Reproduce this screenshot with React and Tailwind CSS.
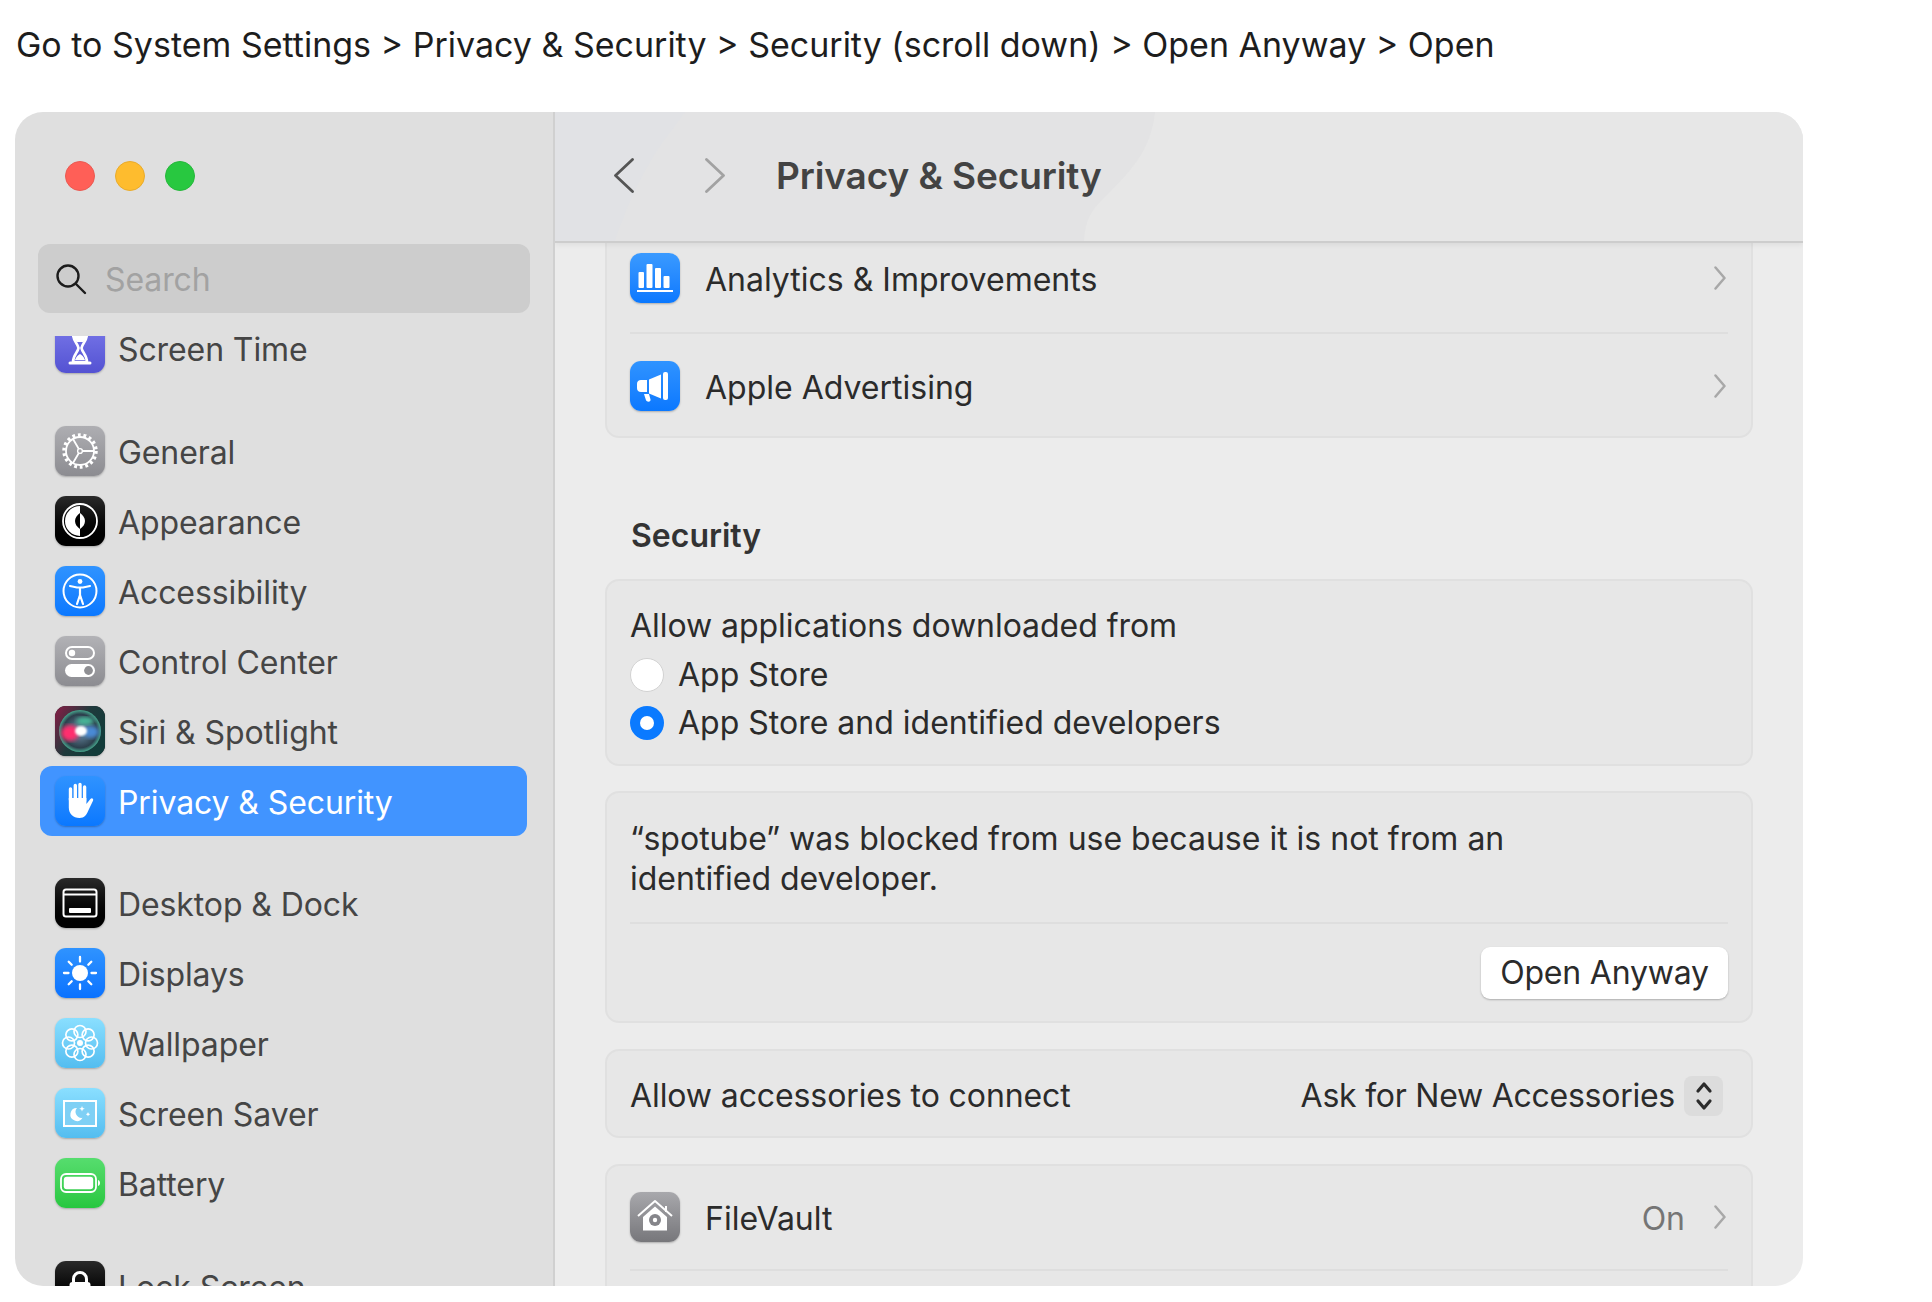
import React from 'react';

const ICON_BASE = 'relative w-[50px] h-[50px] shrink-0 rounded-[11px] overflow-hidden shadow-[0_1px_2px_rgba(0,0,0,0.25)]';

function Tile({ bg, children }) {
  return (
    <div className={`${ICON_BASE} ${bg}`}>
      <svg viewBox="0 0 50 50" className="block w-full h-full">{children}</svg>
    </div>
  );
}

const ScreenTimeIcon = () => (
  <Tile bg="bg-gradient-to-b from-[#7a78ea] to-[#5452d2]">
    <path d="M15 10h20M15 40h20" stroke="#fff" strokeWidth="3" strokeLinecap="round" />
    <path d="M18 11h14c0 7-5 10-5.500 14 .5 4 5.500 7 5.500 14H18c0-7 5-10 5.500-14C23 21 18 18 18 11z" fill="none" stroke="#fff" strokeWidth="2.600" />
    <path d="M18 11h14c0 3-2 6-4 8h-6c-2-2-4-5-4-8zM20 37c1-3 3-5 5-6 2 1 4 3 5 6z" fill="#fff" />
  </Tile>
);

const GeneralIcon = () => (
  <Tile bg="bg-gradient-to-b from-[#aeaeb2] to-[#8c8c91]">
    <circle cx="25" cy="25" r="16" fill="none" stroke="#fff" strokeWidth="3.500" strokeDasharray="2.800 2.800" />
    <circle cx="25" cy="25" r="14" fill="none" stroke="#fff" strokeWidth="1.800" />
    <path d="M25 25h14M25 25l-7-12M25 25l-7 12" stroke="#fff" strokeWidth="1.800" />
    <circle cx="25" cy="25" r="2.400" fill="#a0a0a4" stroke="#fff" strokeWidth="1.400" />
  </Tile>
);

const AppearanceIcon = () => (
  <Tile bg="bg-gradient-to-b from-[#2a2a2a] to-black">
    <circle cx="25" cy="25" r="17" fill="none" stroke="#fff" strokeWidth="1.800" />
    <path d="M25 10a15 15 0 0 0 0 30z" fill="#fff" />
    <path d="M25 17c-3 2-5 5-5 8s2 6 5 8z" fill="#000" />
    <path d="M25 17c3 2 5 5 5 8s-2 6-5 8z" fill="#fff" />
  </Tile>
);

const AccessibilityIcon = () => (
  <Tile bg="bg-gradient-to-b from-[#2f93ff] to-[#0a78ff]">
    <circle cx="25" cy="25" r="16.500" fill="none" stroke="#fff" strokeWidth="2" />
    <circle cx="25" cy="15.500" r="2.400" fill="#fff" />
    <path d="M15 20l7 1.500h6l7-1.500M25 22v7M25 29l-3 9M25 29l3 9" fill="none" stroke="#fff" strokeWidth="2.200" strokeLinecap="round" strokeLinejoin="round" />
  </Tile>
);

const ControlCenterIcon = () => (
  <Tile bg="bg-gradient-to-b from-[#b2b2b6] to-[#8c8c91]">
    <rect x="11" y="11" width="28" height="12" rx="6" fill="none" stroke="#fff" strokeWidth="2" />
    <circle cx="17" cy="17" r="3.200" fill="#fff" />
    <rect x="10" y="28" width="30" height="13" rx="6.500" fill="#fff" />
    <circle cx="33.500" cy="34.500" r="4.400" fill="#8f8f93" />
  </Tile>
);

const SiriIcon = () => (
  <Tile bg="bg-[#101418]">
    <defs>
      <linearGradient id="siriBg" x1="0" y1="0" x2="1" y2="0.6">
        <stop offset="0" stopColor="#8a1c46" />
        <stop offset="0.55" stopColor="#1f3a3c" />
        <stop offset="1" stopColor="#123c3a" />
      </linearGradient>
      <radialGradient id="siriOrb" cx="0.5" cy="0.5" r="0.5">
        <stop offset="0" stopColor="#6f93ad" />
        <stop offset="0.8" stopColor="#2c3f4c" />
        <stop offset="1" stopColor="#47a58d" />
      </radialGradient>
      <filter id="siriBlur"><feGaussianBlur stdDeviation="2" /></filter>
      <filter id="siriBlurSmall"><feGaussianBlur stdDeviation="1.200" /></filter>
    </defs>
    <rect width="50" height="50" fill="url(#siriBg)" />
    <circle cx="25" cy="25" r="21" fill="url(#siriOrb)" />
    <ellipse cx="15" cy="27" rx="9" ry="8" fill="#ff2f6e" filter="url(#siriBlur)" />
    <ellipse cx="36" cy="26" rx="8" ry="6" fill="#4a8ad6" filter="url(#siriBlur)" />
    <ellipse cx="30" cy="15" rx="9" ry="4" fill="#46b898" filter="url(#siriBlur)" />
    <ellipse cx="26" cy="25" rx="6" ry="5" fill="#fff" filter="url(#siriBlurSmall)" />
  </Tile>
);

const HandIcon = () => (
  <Tile bg="bg-gradient-to-b from-[#2f93ff] to-[#0a78ff]">
    <path d="M15.500 24V13M20.300 24V9.500M25 24V8.500M29.600 25V11" stroke="#fff" strokeWidth="3.400" strokeLinecap="round" />
    <path d="M13.800 22h17.600v6l4-5c1.500-1.600 3.500 0 2.600 1.800l-4.200 8.700C31.800 38.500 29.500 42 24.500 42c-6.500 0-10.700-4.500-10.700-10.500z" fill="#fff" />
  </Tile>
);

const DesktopIcon = () => (
  <Tile bg="bg-gradient-to-b from-[#2a2a2a] to-black">
    <rect x="8.500" y="11.500" width="33" height="27" rx="2.500" fill="none" stroke="#fff" strokeWidth="2" />
    <path d="M9 16.500h32" stroke="#fff" strokeWidth="1.800" />
    <rect x="14" y="30" width="22" height="5" rx="1" fill="#fff" />
  </Tile>
);

const DisplaysIcon = () => (
  <Tile bg="bg-gradient-to-b from-[#2f93ff] to-[#0a72ff]">
    <circle cx="25" cy="25" r="8" fill="#fff" />
    <path d="M25 9v4.500M25 36.500V41M9 25h4.500M36.500 25H41M13.700 13.700l3 3M33.300 33.300l3 3M13.700 36.300l3-3M33.300 16.700l3-3" stroke="#fff" strokeWidth="2.300" strokeLinecap="round" />
  </Tile>
);

const WallpaperIcon = () => (
  <Tile bg="bg-gradient-to-b from-[#8adfff] to-[#53bdf0]">
    {[0, 45, 90, 135, 180, 225, 270, 315].map((a) => (
      <circle key={a} cx="25" cy="13.500" r="6" fill="none" stroke="#fff" strokeWidth="1.700" transform={`rotate(${a} 25 25)`} />
    ))}
    <circle cx="25" cy="25" r="3" fill="#fff" />
  </Tile>
);

const ScreenSaverIcon = () => (
  <Tile bg="bg-gradient-to-b from-[#8adfff] to-[#53bdf0]">
    <rect x="9" y="13" width="32" height="25" fill="#7fd0f5" stroke="#fff" strokeWidth="2" />
    <path d="M22 20a6.500 6.500 0 1 0 5.500 9.800A6 6 0 0 1 22 20z" fill="#fff" />
    <path d="M27 18l.8 2 2 .8-2 .8-.8 2-.8-2-2-.8 2-.8zM33 24l.7 1.500 1.500.7-1.500.7-.7 1.500-.7-1.500-1.500-.7 1.500-.7z" fill="#fff" />
  </Tile>
);

const BatteryIcon = () => (
  <Tile bg="bg-gradient-to-b from-[#56dd6e] to-[#26c73f]">
    <rect x="6" y="16" width="35" height="18" rx="5" fill="none" stroke="#fff" strokeWidth="1.800" />
    <rect x="8.800" y="18.800" width="29.400" height="12.400" rx="3" fill="#fff" />
    <path d="M43 22c1.500.5 2 1.800 2 3s-.5 2.500-2 3z" fill="#fff" />
  </Tile>
);

const LockIcon = () => (
  <Tile bg="bg-gradient-to-b from-[#2a2a2a] to-black">
    <path d="M18.500 22v-4a6.500 6.500 0 0 1 13 0v4" fill="none" stroke="#fff" strokeWidth="3" />
    <rect x="14.500" y="21" width="21" height="18" rx="3" fill="#fff" />
  </Tile>
);

const AnalyticsIcon = () => (
  <Tile bg="bg-gradient-to-b from-[#3a9aff] to-[#0a78ff]">
    <rect x="8.500" y="19" width="5.500" height="16" rx="1" fill="#fff" />
    <rect x="16.500" y="11" width="6" height="24" rx="1" fill="#fff" />
    <rect x="25" y="15" width="6" height="20" rx="1" fill="#fff" />
    <rect x="33.500" y="23" width="6" height="12" rx="1" fill="#fff" />
    <rect x="7" y="37" width="36" height="2" fill="#fff" />
  </Tile>
);

const AdvertisingIcon = () => (
  <Tile bg="bg-gradient-to-b from-[#2f93ff] to-[#0a78ff]">
    <path d="M7 23c0-2.500 1.500-4 4-4h6v12h-6c-2.500 0-4-1.500-4-4z" fill="#fff" />
    <path d="M19 18.500l12-5v24l-12-5z" fill="#fff" />
    <rect x="33" y="11" width="5" height="28" rx="2" fill="#fff" />
    <path d="M14 33h5l1.500 5.500c.5 2.500-3.500 3-4.500.8z" fill="#fff" />
  </Tile>
);

const FileVaultIcon = () => (
  <Tile bg="bg-gradient-to-b from-[#a8a8ac] to-[#77777b]">
    <path d="M8 24L25 9l17 15" fill="none" stroke="#fff" strokeWidth="2" strokeLinejoin="round" />
    <path d="M36 14v6" stroke="#fff" strokeWidth="2" />
    <path d="M13 25l12-10.500L37 25v13.500H13z" fill="#fff" />
    <circle cx="25" cy="28" r="6" fill="#85858a" />
    <circle cx="25" cy="28" r="2.200" fill="#fff" />
  </Tile>
);

const Chevron = ({ className }) => (
  <svg viewBox="0 0 14 24" className={`block w-[14px] h-[24px] shrink-0 ${className}`} fill="none" stroke="currentColor" strokeWidth="2.500" strokeLinecap="round" strokeLinejoin="round">
    <path d="M2.500 1.500L11.500 12L2.500 22.500" />
  </svg>
);

const SIDEBAR_GROUPS = [
  { gap: '', items: [{ name: 'Screen Time', Icon: ScreenTimeIcon }] },
  {
    gap: 'mt-[33px]',
    items: [
      { name: 'General', Icon: GeneralIcon },
      { name: 'Appearance', Icon: AppearanceIcon },
      { name: 'Accessibility', Icon: AccessibilityIcon },
      { name: 'Control Center', Icon: ControlCenterIcon },
      { name: 'Siri & Spotlight', Icon: SiriIcon },
      { name: 'Privacy & Security', Icon: HandIcon, active: true },
    ],
  },
  {
    gap: 'mt-[32px]',
    items: [
      { name: 'Desktop & Dock', Icon: DesktopIcon },
      { name: 'Displays', Icon: DisplaysIcon },
      { name: 'Wallpaper', Icon: WallpaperIcon },
      { name: 'Screen Saver', Icon: ScreenSaverIcon },
      { name: 'Battery', Icon: BatteryIcon },
    ],
  },
  { gap: 'mt-[33px]', items: [{ name: 'Lock Screen', Icon: LockIcon }] },
];

function Sidebar() {
  return (
    <aside className="w-[540px] h-full shrink-0 flex flex-col bg-[#dfdfdf] border-r-2 border-[#d0d0d0] overflow-hidden">
      <div className="flex gap-[20px] pl-[50px] pt-[49px]">
        <span className="w-[30px] h-[30px] rounded-full bg-[#ff5f57] border border-[#ea5a52]" />
        <span className="w-[30px] h-[30px] rounded-full bg-[#febc2e] border border-[#e9ab2b]" />
        <span className="w-[30px] h-[30px] rounded-full bg-[#28c840] border border-[#26b83c]" />
      </div>

      <div className="ml-[23px] mt-[53px] w-[492px] h-[69px] shrink-0 flex items-center gap-[18px] pl-[17px] rounded-[12px] bg-[#cdcdcd]">
        <svg viewBox="0 0 32 32" className="w-[32px] h-[32px]" fill="none" stroke="#1c1c1c" strokeWidth="2.400" strokeLinecap="round">
          <circle cx="13" cy="13" r="10.500" />
          <path d="M21 21l9 9" />
        </svg>
        <span className="pt-[2px] text-[32px] tracking-[-0.1px] text-[#a2a2a2]">Search</span>
      </div>

      <div className="mt-[23px] flex-1 overflow-hidden">
        <div className="-mt-[23px]">
          {SIDEBAR_GROUPS.map((group, i) => (
            <div key={i} className={group.gap}>
              {group.items.map(({ name, Icon, active }) => (
                <div
                  key={name}
                  className={`ml-[25px] w-[487px] h-[70px] flex items-center gap-[13px] pl-[15px] rounded-[12px] text-[32px] tracking-[-0.1px] ${
                    active ? 'bg-[#4194ff] text-white' : 'text-[#454545]'
                  }`}
                >
                  <Icon />
                  <span className="pt-[4px]">{name}</span>
                </div>
              ))}
            </div>
          ))}
        </div>
      </div>
    </aside>
  );
}

const CARD = 'mx-[50px] rounded-[14px] bg-[#e7e7e7] border-2 border-[#e0e0e0] px-[23px]';

function LinkRow({ Icon, label, value, height = 'h-[104px]' }) {
  return (
    <div className={`${height} flex items-center`}>
      <Icon />
      <span className="ml-[25px] flex-1 pt-[4px]">{label}</span>
      {value && <span className="mr-[28px] pt-[4px] text-[#757575]">{value}</span>}
      <Chevron className="text-[#a8a8a8] mr-[1px]" />
    </div>
  );
}

function Radio({ checked, label }) {
  return (
    <div className="h-[48px] flex items-center gap-[14px]">
      {checked ? (
        <span className="w-[34px] h-[34px] rounded-full bg-[#0a7aff] flex items-center justify-center">
          <span className="w-[14px] h-[14px] rounded-full bg-white" />
        </span>
      ) : (
        <span className="w-[34px] h-[34px] rounded-full bg-white border border-[#d2d2d2]" />
      )}
      <span>{label}</span>
    </div>
  );
}

function Content() {
  return (
    <main className="flex-1 h-full flex flex-col bg-[#ececec] overflow-hidden">
      <header className="relative z-10 h-[131px] shrink-0 flex items-center gap-[71px] pl-[59px] pb-[2px] bg-[#e7e7e7] border-b-2 border-[#cdcdcd] shadow-[0_2px_5px_rgba(0,0,0,0.06)] overflow-hidden">
        <svg viewBox="0 0 600 129" className="absolute left-0 top-0 w-[600px] h-[129px]">
          <path d="M0 0H600C596 40 575 60 545 90C532 104 530 115 529 129H0z" fill="#e3e3e4" />
          <path d="M0 0H130C110 30 90 45 60 129H0z" fill="#e1e2e5" />
        </svg>
        <svg viewBox="0 0 20 35" className="relative w-[20px] h-[35px] text-[#555]" fill="none" stroke="currentColor" strokeWidth="2.800" strokeLinecap="round" strokeLinejoin="round">
          <path d="M18.500 1.500L1.500 17.500L18.500 33.500" />
        </svg>
        <div className="relative flex items-center gap-[51px]">
          <svg viewBox="0 0 20 35" className="w-[20px] h-[35px] text-[#a2a2a2]" fill="none" stroke="currentColor" strokeWidth="2.800" strokeLinecap="round" strokeLinejoin="round">
            <path d="M1.500 1.500L18.500 17.500L1.500 33.500" />
          </svg>
          <h1 className="text-[37px] font-semibold tracking-[-0.1px] text-[#434343]">Privacy &amp; Security</h1>
        </div>
      </header>

      <div className="flex-1 overflow-hidden text-[32px] leading-[40px] text-[#2b2b2b]">
        <div className={`${CARD} -mt-[19px] h-[214px]`}>
          <LinkRow Icon={AnalyticsIcon} label="Analytics & Improvements" />
          <div className="h-[2px] mt-[2px] bg-[#dedede]" />
          <LinkRow Icon={AdvertisingIcon} label="Apple Advertising" />
        </div>

        <h2 className="mx-[76px] mt-[78px] font-semibold text-[#333]">Security</h2>

        <div className={`${CARD} mt-[23px] h-[187px] pt-[25px]`}>
          <div className="tracking-[-0.05px]">Allow applications downloaded from</div>
          <div className="mt-[5px]">
            <Radio label="App Store" />
            <Radio checked label="App Store and identified developers" />
          </div>
        </div>

        <div className={`${CARD} mt-[25px] h-[232px] pt-[26px]`}>
          <p>“spotube” was blocked from use because it is not from an<br />identified developer.</p>
          <div className="h-[2px] mt-[23px] bg-[#dedede]" />
          <div className="mt-[23px] flex justify-end">
            <button className="w-[247px] h-[52px] rounded-[9px] bg-white shadow-[0_1px_2px_rgba(0,0,0,0.25)] tracking-[-0.2px] text-[#2b2b2b]">Open Anyway</button>
          </div>
        </div>

        <div className={`${CARD} mt-[26px] h-[89px] pt-[4px] flex items-center`}>
          <span className="flex-1 tracking-[-0.1px]">Allow accessories to connect</span>
          <span className="tracking-[-0.25px]">Ask for New Accessories</span>
          <span className="ml-[9px] mr-[5px] w-[39px] h-[40px] rounded-[8px] bg-[#dcdcdc] flex items-center justify-center">
            <svg viewBox="0 0 18 30" className="w-[18px] h-[30px]" fill="none" stroke="#2b2b2b" strokeWidth="3.200" strokeLinecap="round" strokeLinejoin="round">
              <path d="M3 10l6-7 6 7M3 20l6 7 6-7" />
            </svg>
          </span>
        </div>

        <div className={`${CARD} mt-[26px] h-[160px]`}>
          <LinkRow Icon={FileVaultIcon} label="FileVault" value="On" height="h-[102px]" />
          <div className="h-[2px] mt-[1px] bg-[#dedede]" />
        </div>
      </div>
    </main>
  );
}

export default function App() {
  return (
    <div className="w-[1932px] h-[1302px] bg-white overflow-hidden font-['Inter',sans-serif]">
      <p className="pl-[16px] pt-[22px] h-[112px] text-[34px] leading-[46px] text-[#1d1d1d]">
        Go to System Settings &gt; Privacy &amp; Security &gt; Security (scroll down) &gt; Open Anyway &gt; Open
      </p>
      <div className="ml-[15px] w-[1788px] h-[1174px] flex rounded-[28px] overflow-hidden">
        <Sidebar />
        <Content />
      </div>
    </div>
  );
}
